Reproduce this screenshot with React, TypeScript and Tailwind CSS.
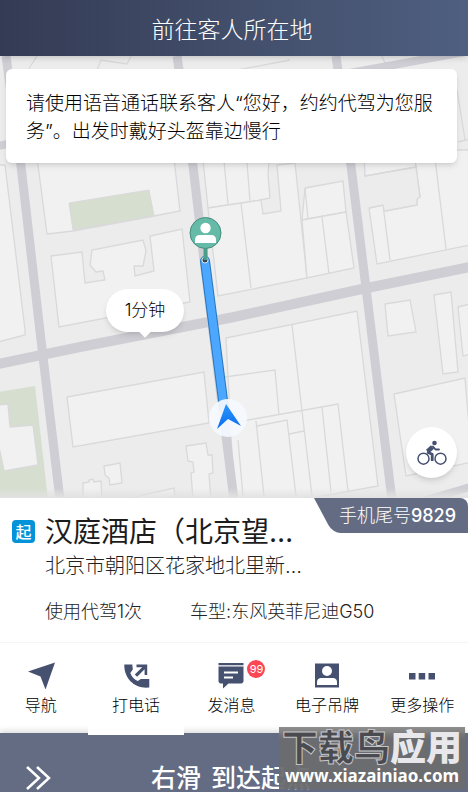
import type { ReactNode } from "react"

interface Action {
    label: string
    icon: ReactNode
    badge?: string
    active?: boolean
}

const NavIcon = () => (
    <svg viewBox="0 0 28 28" className="size-7 fill-[#465170]" aria-hidden="true">
        <path d="M1 10.500 28 1.500 18.500 28.500l-5-13z" />
    </svg>
)

const CallIcon = () => (
    <svg viewBox="0 0 28 28" className="size-7" fill="#465170" aria-hidden="true">
        <path d="M2.300 3.500h8l.5 5-2.500 3.500c1.500 4 4 6.500 7.500 8l3-2h8.500v8.500C13 28 2 18 2.300 3.500z" />
        <path d="M14.500 3.500h10.700V14h-2.600V8.300l-7.500 7.500-2.300-2.200 7.400-7.300h-5.700z" />
    </svg>
)

const MessageIcon = () => (
    <svg viewBox="0 0 28 28" className="size-7" aria-hidden="true">
        <path fill="#465170" d="M1.500 2h25v2.300h-25zM1.500 5.500h25V20c0 1.500-1 2.500-2.500 2.500H11.500L6 27.500v-5H4c-1.500 0-2.500-1-2.500-2.500z" />
        <path stroke="#fff" strokeWidth="2" d="M7 11.500h14M7 16.500h9" />
    </svg>
)

const BadgeIcon = () => (
    <svg viewBox="0 0 28 28" className="size-7" aria-hidden="true">
        <path fill="#465170" d="M2 2.500h24v24H2z" />
        <circle cx="14" cy="10" r="5" fill="#fff" />
        <path fill="#fff" d="M4 24v-3c0-2.500 2-4 4-4h12c2 0 4 1.500 4 4v3z" />
    </svg>
)

const MoreIcon = () => (
    <svg viewBox="0 0 28 28" className="size-7" fill="#465170" aria-hidden="true">
        <path d="M1 12h6.500v6.500H1zM10.700 12h6.500v6.500h-6.500zM20.500 12H27v6.500h-6.500z" />
    </svg>
)

const BikeIcon = () => (
    <svg viewBox="0 0 30 26" className="h-[26px] w-[30px]" fill="none" stroke="#465170" aria-hidden="true">
        <circle cx="6.500" cy="18.700" r="5.500" strokeWidth="1.500" />
        <circle cx="23.500" cy="18.700" r="5.500" strokeWidth="1.500" />
        <circle cx="17.500" cy="3" r="2.300" fill="#465170" stroke="none" />
        <path strokeWidth="4.500" strokeLinejoin="round" d="M15.500 7 10.500 11.500" />
        <path strokeWidth="1.800" strokeLinecap="round" strokeLinejoin="round" d="M16 6.500l2.500 3h3.500" />
        <path strokeWidth="2.800" strokeLinejoin="round" d="M10 12l5.200 2.300V21" />
    </svg>
)

const actions: Action[] = [
    { label: "导航", icon: <NavIcon /> },
    { label: "打电话", icon: <CallIcon />, active: true },
    { label: "发消息", icon: <MessageIcon />, badge: "99" },
    { label: "电子吊牌", icon: <BadgeIcon /> },
    { label: "更多操作", icon: <MoreIcon /> },
]

const StreetMap = () => (
    <svg
        viewBox="0 56 468 442"
        preserveAspectRatio="xMidYMid slice"
        className="absolute inset-0 size-full"
        role="img"
        aria-label="路线地图"
    >
        <defs>
            <linearGradient id="arrow" x1="0" y1="0" x2="0" y2="1">
                <stop offset="0" stopColor="#2b96fa" />
                <stop offset="1" stopColor="#0b6cf0" />
            </linearGradient>
            <linearGradient id="fade" x1="0" y1="0" x2="0" y2="1">
                <stop offset="0" stopColor="#e2e2e2" stopOpacity="0" />
                <stop offset="1" stopColor="#e2e2e2" />
            </linearGradient>
        </defs>
        <rect y="56" width="468" height="442" fill="#ececec" />

        {/* Manzanas y edificios */}
        <g fill="#f1f1f1" stroke="#d9d9db" strokeWidth="1.300">
            <path d="M-2 165H5L25 330V335L-2 342z" />
            <path d="M36 150 47 234 73 231 154 216 180 211 173 150z" />
            <path d="M51 256 82 252 85 283 105 280 103 271 96 272 90 265 92 250 143 240 146 251 143 266 134 266 135 276 154 271 150 236 182 229 190 302 59 327z" />
            <path d="M202 150 208 208 251 202 270 198 268 175 270 150z" />
            <path d="M208 208 241 203 261 200 263 214 281 211 277 165 295 163 307 278 218 296z" />
            <path d="M305 188 343 181 346 212 302 220z" />
            <path d="M302 220 346 212 354 268 307 278z" />
            <path d="M364 150 365 176 416 167 420 197 417 199 417 205 385 211 383 205 369 208 377 264 470 245V150z" />
            <path fill="#ececec" d="M364 150 365 176 416 167 420 197 417 199 417 205 385 211 383 205 369 208z" stroke="none" />
            <path fill="#f1f1f1" d="M364 150 365 176 416 167 414 150z" />
            <path d="M226 338 357 311 378 486 235 512z" />
            <path d="M385 304 410 300 416 332 388 336zM434 295 451 292 458 372 443 374zM458 307 470 304V354L463 356z" />
            <path d="M394 394 465 378 472 462 406 476z" />
            <path d="M67 397 204 372 209 423 73 447z" />
            <path d="M104 466 120 463 122 483 110 485 109 478 105 475zM83 500v-17l6-1v-2l4-1 1 3 7-1 1 20z" />
            <path d="M186 446 206 443 208 455 212 455 213 473 209 474 211 500H193l-2-27 3-1-1-10-5-1z" />
            <path d="M122 500 174 488 175 500" />
        </g>
        <g fill="none" stroke="#d9d9db" strokeWidth="1.300">
            <path d="M223 150 228 204M246 150 250 201M241 203 251 288M322 217 329 274M305 188 308 219" />
            <path d="M365 176 416 167 420 197 417 199 417 205 385 211M369 208 383 205 390 260M434 150 446 249" />
            <path d="M292 325 302 411M225 377 275 370 279 415M237 422 338 404 348 491M256 421 264 496M257 426 287 420 296 496" />
            <path d="M302 411 312 496M289 434 304 431M322 407 331 492M238 440 243 496" />
            <path d="M37 56 28 70M97 70 101 60 127 64 131 56M237 70 290 60M382 56 388 70M457 90 465 140M458 142 470 139" />
        </g>
        <path fill="#d6decf" stroke="#d9d9db" d="M69 203 149 190 154 216 73 230z" />
        <path fill="#d6decf" d="M-2 392 35 386 48 500H-2z" />
        <path fill="#f1f1f1" stroke="#d9d9db" strokeWidth="1.300" d="M-2 405 8 404 10 427 33 425 38 465 4 471-2 442z" />

        {/* Calles */}
        <g fill="none" stroke="#cfced4">
            <path strokeWidth="10" d="M-2 364 80 347 234 317 362 289 470 267" />
            <path strokeWidth="9" d="M6 56 21 166 41 340 60 500M177 56 193 166 204 260 234 500M336 56 351 166 366 288 392 500" />
            <path strokeWidth="8" d="M344 74 470 51M420 502 470 487M-2 146 12 143" />
        </g>

        {/* Ruta hasta el cliente */}
        <path fill="none" stroke="#2777bd" strokeWidth="10" strokeLinecap="round" d="M205 261 224 408" />
        <path fill="none" stroke="#4ba7ff" strokeWidth="8" strokeLinecap="round" d="M205 261 224 408" />
        <circle cx="205" cy="260" r="3" fill="#36464e" stroke="#d6e6ee" />
        <path stroke="#4b9f8a" strokeWidth="4" d="M205.500 246v14" />
        <circle cx="205.500" cy="233" r="15.500" fill="#65bba7" stroke="#478d7e" />
        <circle cx="205.500" cy="228" r="5.200" fill="#fff" />
        <path fill="#fff" d="M195 243v-3q0-5 5-5h11q5 0 5 5v3z" />
        <circle cx="228" cy="418" r="19" fill="#f5faff" fillOpacity=".92" />
        <path fill="url(#arrow)" d="M226 404 241 426 228 419 217 429z" />
        <rect y="488" width="468" height="10" fill="url(#fade)" />
    </svg>
)

const OrderInfo = () => (
    <section className="relative h-36 pt-4 pl-3">
        <div className="absolute top-0 right-0 h-[35px] w-[154px] overflow-hidden rounded-tr-lg">
            <span className="absolute inset-y-0 left-0 w-48 origin-top-left skew-x-[28deg] rounded-bl-lg bg-[#646c84]" />
            <p className="relative flex h-full items-center justify-end pr-3 text-lg text-white">
                手机尾号<span className="font-medium">9829</span>
            </p>
        </div>

        <div className="flex gap-[10px]">
            <span className="mt-[6px] flex size-[23px] shrink-0 items-center justify-center rounded-sm bg-[#0492d8] text-base font-medium text-white">
                起
            </span>
            <div className="text-[#222]">
                <h2 className="text-[28px] leading-9 font-normal text-[#1c1c1c]">汉庭酒店（北京望…</h2>
                <p className="text-xl leading-8">北京市朝阳区花家地北里新…</p>
                <p className="mt-4 flex gap-12 text-lg leading-7">
                    <span>使用代驾1次</span>
                    <span>车型:东风英菲尼迪G50</span>
                </p>
            </div>
        </div>
    </section>
)

const ActionBar = () => (
    <nav className="relative border-t border-[#f5f5f5]">
        <div className="-mr-0.5 -ml-[7px] grid grid-cols-5">
            {
                actions.map(action => (
                    <button
                        key={action.label}
                        type="button"
                        className={`flex flex-col items-center gap-1 pt-[18px] ${action.active ? "z-10 -mb-0.5 h-[92px] bg-white" : "h-[90px]"}`}
                    >
                        <span className="relative">
                            {action.icon}
                            {action.badge && (
                                <span className="absolute -top-px left-[30px] flex size-[18px] items-center justify-center rounded-full bg-[#fb4753] text-[11px] font-normal text-white">
                                    {action.badge}
                                </span>
                            )}
                        </span>
                        <span className="text-base leading-6 whitespace-nowrap text-black">{action.label}</span>
                    </button>
                ))
            }
        </div>
    </nav>
)

const Watermark = () => (
    <div className="absolute right-[3px] bottom-[3px] flex h-[62px] w-[186px] flex-col items-center justify-center bg-linear-to-b from-[#888]/95 via-[#6b6c6e]/95 via-20% to-[#6b6c6e]/95 font-['Noto_Sans','Noto_Sans_CJK_SC',sans-serif]">
        <span className="text-[36px] leading-9 font-black whitespace-nowrap text-[#e8e8ec]">
            <span className="text-[#4a4b50] [-webkit-text-stroke:1px_#c4c4c8]">下载鸟</span>应用
        </span>
        <span className="text-[17px] leading-5 font-bold text-white">www.xiazainiao.com</span>
    </div>
)

export default function App() {
    return (
        <div className="flex min-h-screen flex-col overflow-x-hidden bg-white font-['Inter','Noto_Sans_CJK_SC',sans-serif] font-light">
            <header className="z-10 flex h-14 items-center justify-center bg-linear-to-r from-[#343b55] via-[#424e6a] to-[#4f5f80] shadow-md">
                <h1 className="pt-1 pr-1 text-[23px] text-white">前往客人所在地</h1>
            </header>

            <main className="relative min-h-[400px] flex-1 pt-[13px] pr-[11px] pl-[6px]">
                <StreetMap />
                <p className="relative rounded-md bg-white px-5 pt-[21px] pb-[17px] text-[19px] leading-7 text-black shadow-md">
                    请使用语音通话联系客人“您好，约约代驾为您服务”。出发时戴好头盔靠边慢行
                </p>
                <div className="absolute top-[233px] left-[106px] flex h-[43px] w-[78px] items-center justify-center rounded-full bg-white text-[17px] text-black shadow-md">
                    1分钟
                    <span className="absolute -bottom-1 size-2 rotate-45 bg-white" />
                </div>
                <button
                    type="button"
                    aria-label="骑行"
                    className="absolute right-[11px] bottom-5 flex size-[51px] items-center justify-center rounded-full bg-white shadow-md"
                >
                    <BikeIcon />
                </button>
            </main>

            <OrderInfo />
            <ActionBar />

            <footer className="relative h-[59px] bg-[#646c84] shadow-[0_-2px_6px_rgba(0,0,0,0.15)]">
                <button type="button" className="flex size-full items-end justify-center gap-2.5 overflow-hidden pr-1.5 text-[25px] leading-7 font-medium text-white">
                    <svg viewBox="0 0 26 24" className="absolute bottom-[2px] left-[25px] h-6 w-[26px]" fill="none" stroke="#fff" strokeWidth="2.500" aria-hidden="true">
                        <path d="M2 1l12 11L2 23M12 1l12 11-12 11" />
                    </svg>
                    <span>右滑</span>
                    <span>到达起点</span>
                </button>
                <Watermark />
            </footer>
        </div>
    )
}
